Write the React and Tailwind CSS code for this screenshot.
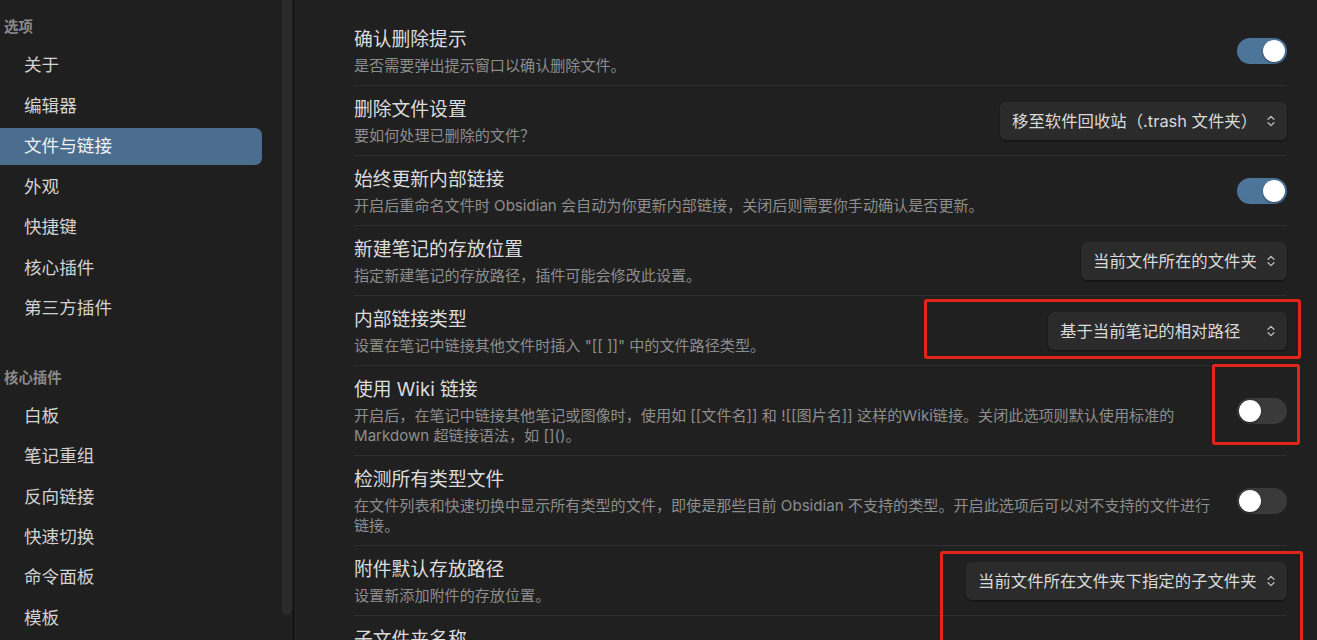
import React from "react";

const FONT = { fontFamily: 'Inter, "Noto Sans CJK SC", "Noto Sans", sans-serif' };

function Chevrons() {
  return (
    <svg width="14" height="14" viewBox="0 0 24 24" fill="none" stroke="#bdbdbd" strokeWidth="2.2" strokeLinecap="round" strokeLinejoin="round">
      <path d="m7 15 5 5 5-5" />
      <path d="m7 9 5-5 5 5" />
    </svg>
  );
}

function Toggle({ on }) {
  return (
    <div className={"flex h-[26px] w-[50px] shrink-0 items-center rounded-full px-[2px] " + (on ? "justify-end bg-[#4d7499]" : "justify-start bg-[#3a3a3a]")}>
      <div className="h-[22px] w-[22px] rounded-full bg-white shadow-[0_1px_2px_rgba(0,0,0,0.4)]" />
    </div>
  );
}

function Select({ text, w }) {
  return (
    <div className={"flex h-[38px] shrink-0 items-center justify-between rounded-[6px] bg-[#2b2b2b] pl-[12px] pr-[9px] text-[16.4px] text-[#dadada] shadow-[0_1px_2px_rgba(0,0,0,0.5)] " + w}>
      <span className="whitespace-nowrap">{text}</span>
      <Chevrons />
    </div>
  );
}

function Row({ title, desc, control, first, two }) {
  return (
    <div className={"flex items-center pb-[9px] " + (first ? "pt-[11px]" : "border-t border-[#2f2f2f] pt-[10px]")}>
      <div className="min-w-0 flex-1 pr-[20px]">
        <div className="h-[27px] overflow-hidden whitespace-nowrap text-[18.8px] leading-[27px] text-[#dcdcdc]">{title}</div>
        <div className={"mt-[3px] overflow-hidden text-[15.1px] leading-[20px] text-[#8d8d8d] " + (two ? "h-[40px]" : "h-[20px]")}>{desc}</div>
      </div>
      {control}
    </div>
  );
}

function NavItem({ label, active }) {
  return (
    <div className={"flex h-[37px] w-[262px] items-center rounded-r-[7px] pl-[24px] text-[17.6px] " + (active ? "bg-[#4b6e8f] text-[#eef2f6]" : "text-[#d2d2d2]")}>
      {label}
    </div>
  );
}

export default function App() {
  const group1 = ["关于", "编辑器", "文件与链接", "外观", "快捷键", "核心插件", "第三方插件"];
  const group2 = ["白板", "笔记重组", "反向链接", "快速切换", "命令面板", "模板"];
  return (
    <div className="relative flex h-[640px] w-[1317px] overflow-hidden bg-[#202020]" style={FONT}>
      {/* Sidebar */}
      <div className="flex w-[293px] shrink-0 bg-[#1f1f1f]">
        <div className="flex w-[281px] flex-col">
          <div className="pl-[4px] pt-[17px] text-[14.4px] font-bold leading-[20px] text-[#8a8a8a]">选项</div>
          <div className="mt-[10px] flex flex-col gap-[3.5px]">
            {group1.map((g) => (
              <NavItem key={g} label={g} active={g === "文件与链接"} />
            ))}
          </div>
          <div className="mt-[41px] pl-[4px] text-[14.4px] font-bold leading-[20px] text-[#8a8a8a]">核心插件</div>
          <div className="mt-[9.5px] flex flex-col gap-[3.4px]">
            {group2.map((g) => (
              <NavItem key={g} label={g} />
            ))}
          </div>
        </div>
        <div className="flex w-[12px] justify-center">
          <div className="h-[615px] w-[10px] rounded-b-[5px] bg-[#2b2b2b]" />
        </div>
      </div>
      <div className="w-[1px] shrink-0 bg-[#0c0c0c]" />

      {/* Main */}
      <div className="flex-1 pl-[60px] pr-[30px] pt-[15px]">
        <Row first title="确认删除提示" desc="是否需要弹出提示窗口以确认删除文件。" control={<Toggle on />} />
        <Row title="删除文件设置" desc="要如何处理已删除的文件？" control={<Select text="移至软件回收站（.trash 文件夹）" w="w-[287px]" />} />
        <Row title="始终更新内部链接" desc="开启后重命名文件时 Obsidian 会自动为你更新内部链接，关闭后则需要你手动确认是否更新。" control={<Toggle on />} />
        <Row title="新建笔记的存放位置" desc="指定新建笔记的存放路径，插件可能会修改此设置。" control={<Select text="当前文件所在的文件夹" w="w-[206px]" />} />
        <Row title="内部链接类型" desc={'设置在笔记中链接其他文件时插入 "[[ ]]" 中的文件路径类型。'} control={<Select text="基于当前笔记的相对路径" w="w-[239px]" />} />
        <Row
          two
          title="使用 Wiki 链接"
          desc={<>开启后，在笔记中链接其他笔记或图像时，使用如 [[文件名]] 和 ![[图片名]] 这样的Wiki链接。关闭此选项则默认使用标准的<br />Markdown 超链接语法，如 []()。</>}
          control={<Toggle />}
        />
        <Row
          two
          title="检测所有类型文件"
          desc={<>在文件列表和快速切换中显示所有类型的文件，即使是那些目前 Obsidian 不支持的类型。开启此选项后可以对不支持的文件进行<br />链接。</>}
          control={<Toggle />}
        />
        <Row title="附件默认存放路径" desc="设置新添加附件的存放位置。" control={<Select text="当前文件所在文件夹下指定的子文件夹" w="w-[321px]" />} />
        <Row title="子文件夹名称" desc="附件存放的子文件夹名称。" control={<div />} />
      </div>

      {/* Red annotation boxes */}
      <div className="absolute left-[924px] top-[299px] h-[60px] w-[377px] rounded-[3px] border-[3px] border-[#e3261c]" />
      <div className="absolute left-[1212px] top-[364px] h-[81px] w-[88px] rounded-[3px] border-[3px] border-[#e3261c]" />
      <div className="absolute left-[940px] top-[551px] h-[100px] w-[363px] rounded-[3px] border-[3px] border-[#e3261c]" />
    </div>
  );
}
